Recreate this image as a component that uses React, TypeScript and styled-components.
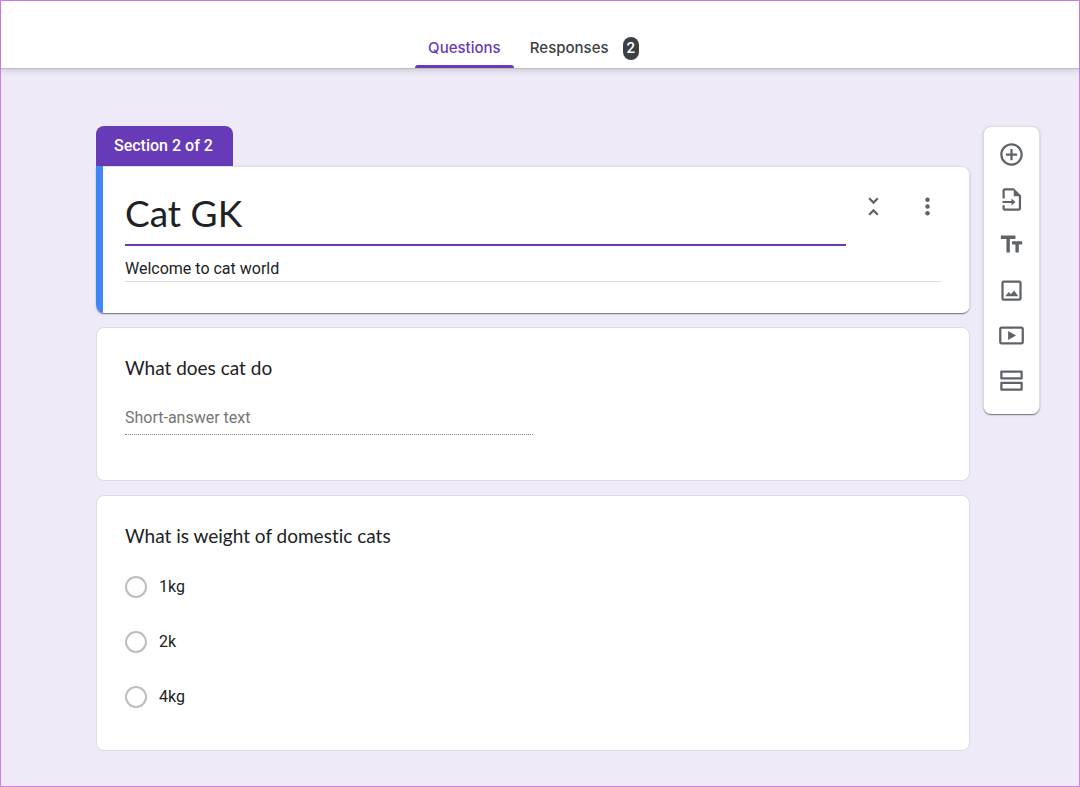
import React from "react";
import styled, { createGlobalStyle } from "styled-components";

const display = `Lato, "Open Sans", sans-serif`;
const body = `Roboto, "Liberation Sans", sans-serif`;
const purple = "#673ab7";

const GlobalStyle = createGlobalStyle`
  *, *::before, *::after { box-sizing: border-box; }
  body { margin: 0; background: #f0ebf8; font-family: ${body}; color: #202124; }
  button, input { font: inherit; color: inherit; }
  fieldset, legend { margin: 0; padding: 0; border: 0; }
`;

const Page = styled.div`
  min-height: 100vh;
  border: 1px solid #cf7eee;
  background: #eeeaf8;
`;

const TopBar = styled.header`
  display: flex;
  justify-content: center;
  align-items: flex-end;
  height: 68px;
  background: #fff;
  border-bottom: 1px solid #bdbdc1;
  box-shadow: 0 2px 6px rgba(60, 64, 67, 0.18);
`;

const Tabs = styled.nav`
  display: flex;
  gap: 4px;
  padding-right: 14px;
`;

const Tab = styled.button<{ $active?: boolean }>`
  position: relative;
  display: flex;
  align-items: center;
  justify-content: center;
  gap: 14px;
  min-width: 99px;
  height: 40px;
  padding: 0 12px;
  border: 0;
  background: none;
  font: 500 15px/20px Inter, sans-serif;
  color: ${(p) => (p.$active ? purple : "#3c4043")};
  cursor: pointer;

  &::after {
    content: "";
    position: absolute;
    left: 0;
    right: 0;
    bottom: 0;
    height: 3px;
    border-radius: 3px 3px 0 0;
    background: ${(p) => (p.$active ? purple : "transparent")};
  }
`;

const Badge = styled.span`
  padding: 0 4px;
  border-radius: 9px;
  background: #3c4043;
  color: #fff;
  font: 500 15px/23px ${body};
`;

const Main = styled.main`
  display: flex;
  align-items: flex-start;
  gap: 13px;
  padding: 57px 39px 34px 95px;
`;

const Form = styled.form`
  flex: 1;
  min-width: 0;
`;

const SectionLabel = styled.div`
  width: fit-content;
  padding: 8px 20px 8px 18px;
  border-radius: 8px 8px 0 0;
  background: ${purple};
  color: #fff;
  font-size: 16px;
  font-weight: 500;
  line-height: 24px;
`;

const Cards = styled.div`
  display: flex;
  flex-direction: column;
  gap: 14px;
`;

const Elevated = `
  box-shadow: 0 2px 1px -1px rgba(0, 0, 0, 0.3), 0 1px 1px rgba(0, 0, 0, 0.2),
    0 1px 3px rgba(0, 0, 0, 0.12);
`;

const TitleCard = styled.section`
  display: flex;
  overflow: hidden;
  border-radius: 0 8px 8px 8px;
  background: #fff;
  ${Elevated}
`;

const Accent = styled.div`
  flex: none;
  width: 7px;
  background: #4285f4;
`;

const TitleBody = styled.div`
  flex: 1;
  min-width: 0;
  padding: 22px 0 31px 22px;
  border: 1px solid #dadce0;
  border-width: 1px 1px 0 0;
  border-radius: 0 8px 0 0;
`;

const TitleRow = styled.div`
  display: flex;
  align-items: flex-start;
  padding-right: 15px;
`;

const TitleInput = styled.input`
  flex: 1;
  min-width: 0;
  height: 57px;
  padding: 0 0 9px;
  border: 0;
  border-bottom: 2px solid ${purple};
  outline: 0;
  background: none;
  font-family: ${display};
  font-size: 37px;
`;

const DescriptionRow = styled.div`
  display: flex;
  padding: 10px 28px 0 0;
`;

const DescriptionInput = styled.input`
  flex: 1;
  min-width: 0;
  height: 26px;
  padding: 0;
  border: 0;
  border-bottom: 1px solid #dadce0;
  outline: 0;
  background: none;
  font-size: 16px;
`;

const IconButton = styled.button`
  display: flex;
  justify-content: center;
  align-items: center;
  width: 54px;
  height: 35px;
  padding: 0;
  border: 0;
  background: none;
  color: #5f6368;
  cursor: pointer;
`;

const QuestionCard = styled.section`
  padding: 28px 28px 42px;
  border: 1px solid #dadce0;
  border-radius: 8px;
  background: #fff;
`;

const questionText = `
  font-family: ${display};
  font-size: 19px;
  line-height: 24px;
  font-variant-ligatures: none;
`;

const QuestionTitle = styled.label`
  display: block;
  ${questionText}
`;

const AnswerInput = styled.input`
  display: block;
  width: 50%;
  height: 31px;
  margin: 24px 0 3px;
  padding: 0 0 4px;
  border: 0;
  border-bottom: 1px dotted #80868b;
  background: none;
  font-size: 16px;

  &::placeholder { color: #757575; opacity: 1; }
`;

const Legend = styled.legend`
  ${questionText}
`;

const Options = styled.div`
  display: flex;
  flex-direction: column;
  gap: 33px;
  padding-top: 28px;
`;

const Option = styled.label`
  display: flex;
  align-items: center;
  gap: 12px;
  font-size: 16px;
  line-height: 22px;
`;

const Radio = styled.input`
  appearance: none;
  width: 22px;
  height: 22px;
  margin: 0;
  border: 2px solid #bdbdbd;
  border-radius: 50%;
  &:checked { border-color: ${purple}; box-shadow: inset 0 0 0 4px #fff; background: ${purple}; }
`;

const Toolbar = styled.aside`
  display: flex;
  flex-direction: column;
  width: 57px;
  min-height: 288px;
  padding: 5px 1px 11px 0;
  border: 1px solid #dadce0;
  border-bottom: 0;
  border-radius: 8px;
  background: #fff;
  ${Elevated}
`;

const ToolButton = styled(IconButton)`
  flex: 1;
  width: auto;
`;

const Icon = ({ children }: { children: React.ReactNode }) => (
  <svg width="27" height="27" viewBox="0 0 24 24" fill="currentColor" aria-hidden="true">
    {children}
  </svg>
);

const tools = [
  {
    label: "Add question",
    icon: (
      <path d="M13 7h-2v4H7v2h4v4h2v-4h4v-2h-4V7zm-1-5C6.48 2 2 6.48 2 12s4.480 10 10 10 10-4.480 10-10S17.520 2 12 2zm0 18c-4.410 0-8-3.590-8-8s3.590-8 8-8 8 3.590 8 8-3.590 8-8 8z" />
    ),
  },
  {
    label: "Import questions",
    icon: (
      <path d="M14 2H6c-1.100 0-2 .9-2 2v7h2V4h8v5h4.500v11H6v-3H4v3c0 1.100.9 2 2 2h12.500c1.100 0 2-.9 2-2V8.500L14 2zM12 11l3.500 3.200L12 17.400v-2.300H4v-1.800h8V11z" />
    ),
  },
  {
    label: "Add title and description",
    icon: <path d="M2.500 4v3h5v12h3V7h5V4h-13zm19 5h-9v3h3v7h3v-7h3V9z" />,
  },
  {
    label: "Add image",
    icon: (
      <path d="M19 3H5c-1.100 0-2 .9-2 2v14c0 1.100.9 2 2 2h14c1.100 0 2-.9 2-2V5c0-1.100-.9-2-2-2zm0 16H5V5h14v14zM6.500 17l3-3.700 2 2 2.800-3.300 3.700 5z" />
    ),
  },
  {
    label: "Add video",
    icon: (
      <path d="M21 4H3c-1.100 0-2 .9-2 2v12c0 1.100.9 2 2 2h18c1.100 0 2-.9 2-2V6c0-1.100-.9-2-2-2zm0 14H3V6h18v12zM9 8v8l7-4z" />
    ),
  },
  {
    label: "Add section",
    icon: (
      <path d="M21 3H3c-.55 0-1 .45-1 1v6c0 .55.45 1 1 1h18c.55 0 1-.45 1-1V4c0-.55-.45-1-1-1zm-1 6H4V5h16v4zm1 4H3c-.55 0-1 .45-1 1v6c0 .55.45 1 1 1h18c.55 0 1-.45 1-1v-6c0-.55-.45-1-1-1zm-1 6H4v-4h16v4z" />
    ),
  },
];

const weights = ["1kg", "2k", "4kg"];

export default function App() {
  return (
    <Page>
      <GlobalStyle />
      <TopBar>
        <Tabs>
          <Tab type="button" $active>Questions</Tab>
          <Tab type="button">
            Responses <Badge>2</Badge>
          </Tab>
        </Tabs>
      </TopBar>
      <Main>
        <Form>
          <SectionLabel>Section 2 of 2</SectionLabel>
          <Cards>
            <TitleCard>
              <Accent />
              <TitleBody>
                <TitleRow>
                  <TitleInput aria-label="Section title" defaultValue="Cat GK" />
                  <IconButton type="button" aria-label="Collapse section">
                    <Icon>
                      <path d="M7.410 18.590L8.830 20 12 16.830 15.170 20l1.410-1.410L12 14l-4.590 4.590zm9.180-13.180L15.170 4 12 7.170 8.830 4 7.410 5.410 12 10l4.590-4.590z" />
                    </Icon>
                  </IconButton>
                  <IconButton type="button" aria-label="More options">
                    <Icon>
                      <circle cx="12" cy="6" r="2" />
                      <circle cx="12" cy="12" r="2" />
                      <circle cx="12" cy="18" r="2" />
                    </Icon>
                  </IconButton>
                </TitleRow>
                <DescriptionRow>
                  <DescriptionInput aria-label="Section description" defaultValue="Welcome to cat world" />
                </DescriptionRow>
              </TitleBody>
            </TitleCard>
            <QuestionCard>
              <QuestionTitle htmlFor="cat-do">What does cat do</QuestionTitle>
              <AnswerInput id="cat-do" placeholder="Short-answer text" />
            </QuestionCard>
            <QuestionCard>
              <fieldset>
                <Legend>What is weight of domestic cats</Legend>
                <Options>
                  {weights.map((w) => (
                    <Option key={w}>
                      <Radio type="radio" name="weight" value={w} />
                      {w}
                    </Option>
                  ))}
                </Options>
              </fieldset>
            </QuestionCard>
          </Cards>
        </Form>
        <Toolbar>
          {tools.map((t) => (
            <ToolButton key={t.label} type="button" aria-label={t.label}>
              <Icon>{t.icon}</Icon>
            </ToolButton>
          ))}
        </Toolbar>
      </Main>
    </Page>
  );
}
